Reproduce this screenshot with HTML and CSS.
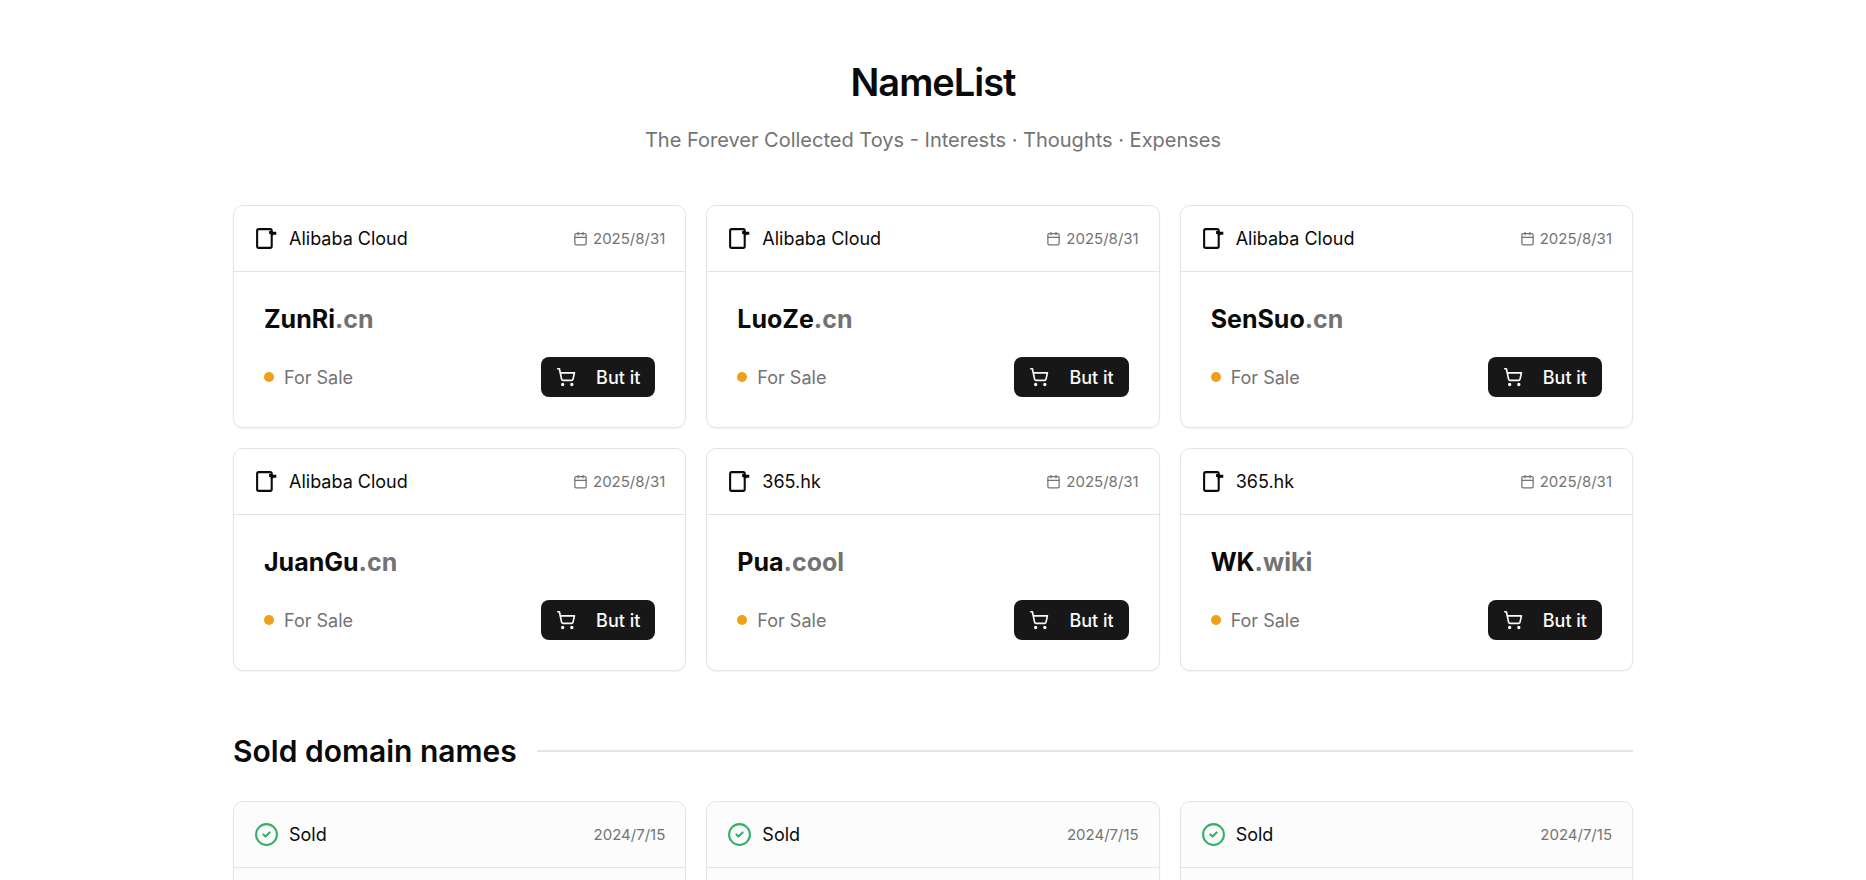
FILE: index.html
```
<!DOCTYPE html>
<html lang="en">
<head>
<meta charset="utf-8">
<meta name="viewport" content="width=device-width, initial-scale=1">
<title>NameList</title>
<link rel="stylesheet" href="styles.css">
</head>
<body>
<svg class="sprite" aria-hidden="true">
  <symbol id="registrar" viewBox="0 0 24 24"><rect x="3" y="3" width="14" height="18" rx="1.500" fill="none" stroke="currentColor" stroke-width="2"/><path d="M14.500 4.800h3.500v.8h3.400v2.800h-2.900v.8H16V7.600h-1.500z" fill="currentColor"/></symbol>
  <symbol id="calendar" viewBox="0 0 24 24"><g fill="none" stroke="currentColor" stroke-width="2" stroke-linecap="round" stroke-linejoin="round"><path d="M8 2v4M16 2v4M3 10h18"/><rect x="3" y="4" width="18" height="18" rx="2"/></g></symbol>
  <symbol id="cart" viewBox="0 0 24 24"><g fill="none" stroke="currentColor" stroke-width="2" stroke-linecap="round" stroke-linejoin="round"><circle cx="8" cy="21" r="1"/><circle cx="19" cy="21" r="1"/><path d="M2.05 2.05h2l2.66 12.42a2 2 0 0 0 2 1.58h9.78a2 2 0 0 0 1.95-1.57l1.65-7.43H5.12"/></g></symbol>
  <symbol id="check" viewBox="0 0 24 24"><g fill="none" stroke="currentColor" stroke-width="2" stroke-linecap="round" stroke-linejoin="round"><circle cx="12" cy="12" r="10"/><path d="m9 12 2 2 4-4"/></g></symbol>
</svg>
<div class="page">
  <header class="hero">
    <h1 class="hero-title">NameList</h1>
    <p class="hero-text">The Forever Collected Toys - Interests · Thoughts · Expenses</p>
  </header>
  <main>
    <section class="grid" aria-label="Domains for sale">
      <article class="card">
        <div class="card-head"><svg class="icon"><use href="#registrar"/></svg><span>Alibaba Cloud</span><span class="date"><svg class="icon-small"><use href="#calendar"/></svg><time>2025/8/31</time></span></div>
        <div class="card-body"><h3 class="domain">ZunRi<span class="suffix">.cn</span></h3><div class="row"><span class="status">For Sale</span><button class="buy" type="button"><svg class="icon-cart"><use href="#cart"/></svg>But it</button></div></div>
      </article>
      <article class="card">
        <div class="card-head"><svg class="icon"><use href="#registrar"/></svg><span>Alibaba Cloud</span><span class="date"><svg class="icon-small"><use href="#calendar"/></svg><time>2025/8/31</time></span></div>
        <div class="card-body"><h3 class="domain">LuoZe<span class="suffix">.cn</span></h3><div class="row"><span class="status">For Sale</span><button class="buy" type="button"><svg class="icon-cart"><use href="#cart"/></svg>But it</button></div></div>
      </article>
      <article class="card">
        <div class="card-head"><svg class="icon"><use href="#registrar"/></svg><span>Alibaba Cloud</span><span class="date"><svg class="icon-small"><use href="#calendar"/></svg><time>2025/8/31</time></span></div>
        <div class="card-body"><h3 class="domain">SenSuo<span class="suffix">.cn</span></h3><div class="row"><span class="status">For Sale</span><button class="buy" type="button"><svg class="icon-cart"><use href="#cart"/></svg>But it</button></div></div>
      </article>
      <article class="card">
        <div class="card-head"><svg class="icon"><use href="#registrar"/></svg><span>Alibaba Cloud</span><span class="date"><svg class="icon-small"><use href="#calendar"/></svg><time>2025/8/31</time></span></div>
        <div class="card-body"><h3 class="domain">JuanGu<span class="suffix">.cn</span></h3><div class="row"><span class="status">For Sale</span><button class="buy" type="button"><svg class="icon-cart"><use href="#cart"/></svg>But it</button></div></div>
      </article>
      <article class="card">
        <div class="card-head"><svg class="icon"><use href="#registrar"/></svg><span>365.hk</span><span class="date"><svg class="icon-small"><use href="#calendar"/></svg><time>2025/8/31</time></span></div>
        <div class="card-body"><h3 class="domain">Pua<span class="suffix">.cool</span></h3><div class="row"><span class="status">For Sale</span><button class="buy" type="button"><svg class="icon-cart"><use href="#cart"/></svg>But it</button></div></div>
      </article>
      <article class="card">
        <div class="card-head"><svg class="icon"><use href="#registrar"/></svg><span>365.hk</span><span class="date"><svg class="icon-small"><use href="#calendar"/></svg><time>2025/8/31</time></span></div>
        <div class="card-body"><h3 class="domain">WK<span class="suffix">.wiki</span></h3><div class="row"><span class="status">For Sale</span><button class="buy" type="button"><svg class="icon-cart"><use href="#cart"/></svg>But it</button></div></div>
      </article>
    </section>
    <section>
      <div class="section-head"><h2 class="section-title">Sold domain names</h2><hr class="rule"></div>
      <div class="grid">
        <article class="card sold"><div class="card-head"><svg class="icon done"><use href="#check"/></svg><span>Sold</span><time class="date">2024/7/15</time></div><div class="card-body"></div></article>
        <article class="card sold"><div class="card-head"><svg class="icon done"><use href="#check"/></svg><span>Sold</span><time class="date">2024/7/15</time></div><div class="card-body"></div></article>
        <article class="card sold"><div class="card-head"><svg class="icon done"><use href="#check"/></svg><span>Sold</span><time class="date">2024/7/15</time></div><div class="card-body"></div></article>
      </div>
    </section>
  </main>
</div>
</body>
</html>
```
FILE: styles.css
```
* { box-sizing: border-box; }
body { margin: 0; background: #fff; color: #0a0a0a; font-family: Inter, "Liberation Sans", sans-serif; font-size: 18px; line-height: 25px; }
h1, h2, h3, p { margin: 0; }
svg { flex: none; }
.sprite { display: none; }
.page { max-width: 1440px; margin: 0 auto; padding: 60px 20px; }
.hero { display: flex; flex-direction: column; align-items: center; gap: 20px; margin-bottom: 50px; text-align: center; }
.hero-title { font-size: 38px; line-height: 45px; font-weight: 600; letter-spacing: -1px; }
.hero-text { font-size: 20px; line-height: 30px; color: #737373; }
.grid { display: grid; grid-template-columns: repeat(3, minmax(0, 1fr)); gap: 20px; }
.card { border: 1px solid #e5e5e5; border-radius: 10px; background: #fff; box-shadow: 0 1px 2px rgba(0, 0, 0, .05); overflow: hidden; }
.card-head { display: flex; align-items: center; gap: 10px; padding: 20px; border-bottom: 1px solid #e5e5e5; }
.icon { width: 25px; height: 25px; }
.date { display: flex; align-items: center; gap: 5px; margin-left: auto; font-size: 15px; color: #737373; }
.icon-small { width: 15px; height: 15px; }
.card-body { padding: 30px; }
.domain { font-size: 25px; line-height: 35px; font-weight: 700; }
.suffix { color: #737373; }
.row { display: flex; align-items: center; justify-content: space-between; margin-top: 20px; }
.status { display: flex; align-items: center; gap: 10px; color: #737373; }
.status::before { content: ""; width: 10px; height: 10px; border-radius: 50%; background: #f0a016; }
.buy { display: flex; align-items: center; gap: 20px; height: 40px; padding: 0 15px; border: 0; border-radius: 8px; background: #171717; color: #fafafa; font: inherit; font-weight: 500; cursor: pointer; }
.icon-cart { width: 20px; height: 20px; }
.section-head { display: flex; align-items: center; gap: 20px; margin: 60px 0 30px; }
.section-title { font-size: 30px; line-height: 40px; font-weight: 600; }
.rule { flex: 1; height: 2px; margin: 0; border: 0; background: #e5e5e5; }
.sold { background: #fcfcfc; }
.done { color: #34b066; }
```
